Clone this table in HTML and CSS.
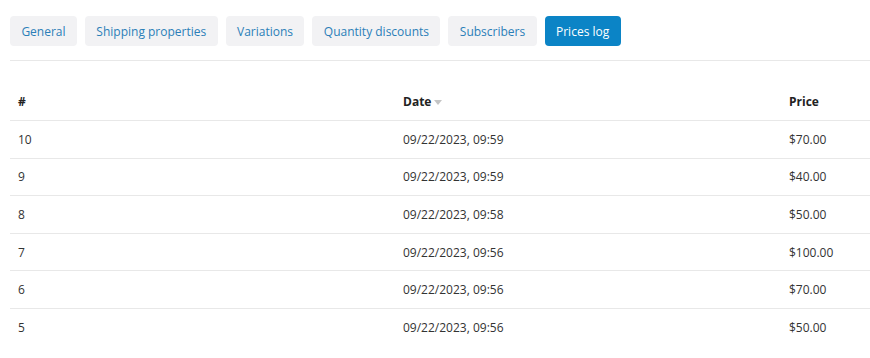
FILE: index.html
```html
<!DOCTYPE html>
<html lang="en">
<head>
    <meta charset="UTF-8">
    <meta name="viewport" content="width=device-width, initial-scale=1.0">
    <title>Prices log</title>
    <link rel="stylesheet" href="styles.css">
</head>
<body>
    <div class="panel">
        <div class="tabs">
            <button class="tab">General</button>
            <button class="tab">Shipping properties</button>
            <button class="tab">Variations</button>
            <button class="tab">Quantity discounts</button>
            <button class="tab">Subscribers</button>
            <button class="tab active">Prices log</button>
        </div>

        <table class="log-table">
            <thead>
                <tr>
                    <th class="col-id">#</th>
                    <th class="col-date">Date<span class="sort-arrow"></span></th>
                    <th class="col-price">Price</th>
                </tr>
            </thead>
            <tbody>
                <tr><td>10</td><td>09/22/2023, 09:59</td><td>$70.00</td></tr>
                <tr><td>9</td><td>09/22/2023, 09:59</td><td>$40.00</td></tr>
                <tr><td>8</td><td>09/22/2023, 09:58</td><td>$50.00</td></tr>
                <tr><td>7</td><td>09/22/2023, 09:56</td><td>$100.00</td></tr>
                <tr><td>6</td><td>09/22/2023, 09:56</td><td>$70.00</td></tr>
                <tr><td>5</td><td>09/22/2023, 09:56</td><td>$50.00</td></tr>
            </tbody>
        </table>
    </div>
</body>
</html>
```

FILE: styles.css
```css
:root {
    --primary: #0b84c6;
    --link: #2b7fb8;
    --tab-bg: #f2f2f4;
    --text: #333333;
    --heading: #222222;
    --border: #e8e8e8;
}

* {
    margin: 0;
    padding: 0;
    box-sizing: border-box;
}

body {
    background: #ffffff;
    color: var(--text);
    font-family: "Open Sans", "Noto Sans", sans-serif;
    font-size: 12px;
    padding: 16px 0 0 10px;
}

.tabs {
    display: flex;
    gap: 8px;
    padding-bottom: 14px;
    border-bottom: 1px solid var(--border);
}

.tab {
    background: var(--tab-bg);
    color: var(--link);
    border: none;
    border-radius: 4px;
    height: 30px;
    padding: 0 11.4px;
    font-family: inherit;
    font-size: 12px;
    cursor: pointer;
}

.tab.active {
    background: var(--primary);
    color: #ffffff;
}

.log-table {
    width: 860px;
    border-collapse: collapse;
    margin-top: 22px;
}

.log-table th,
.log-table td {
    text-align: left;
    padding: 0 8px;
    height: 37.6px;
}

.log-table th {
    font-weight: 700;
    color: var(--heading);
    border-bottom: 1px solid var(--border);
}

.log-table td {
    border-bottom: 1px solid var(--border);
}

.log-table tbody tr:last-child td {
    border-bottom: none;
}

.col-id {
    width: 385px;
}

.col-date {
    width: 386px;
}

.sort-arrow {
    display: inline-block;
    margin-left: 3px;
    vertical-align: middle;
    border-left: 4px solid transparent;
    border-right: 4px solid transparent;
    border-top: 5px solid #c4c4c4;
}
```
